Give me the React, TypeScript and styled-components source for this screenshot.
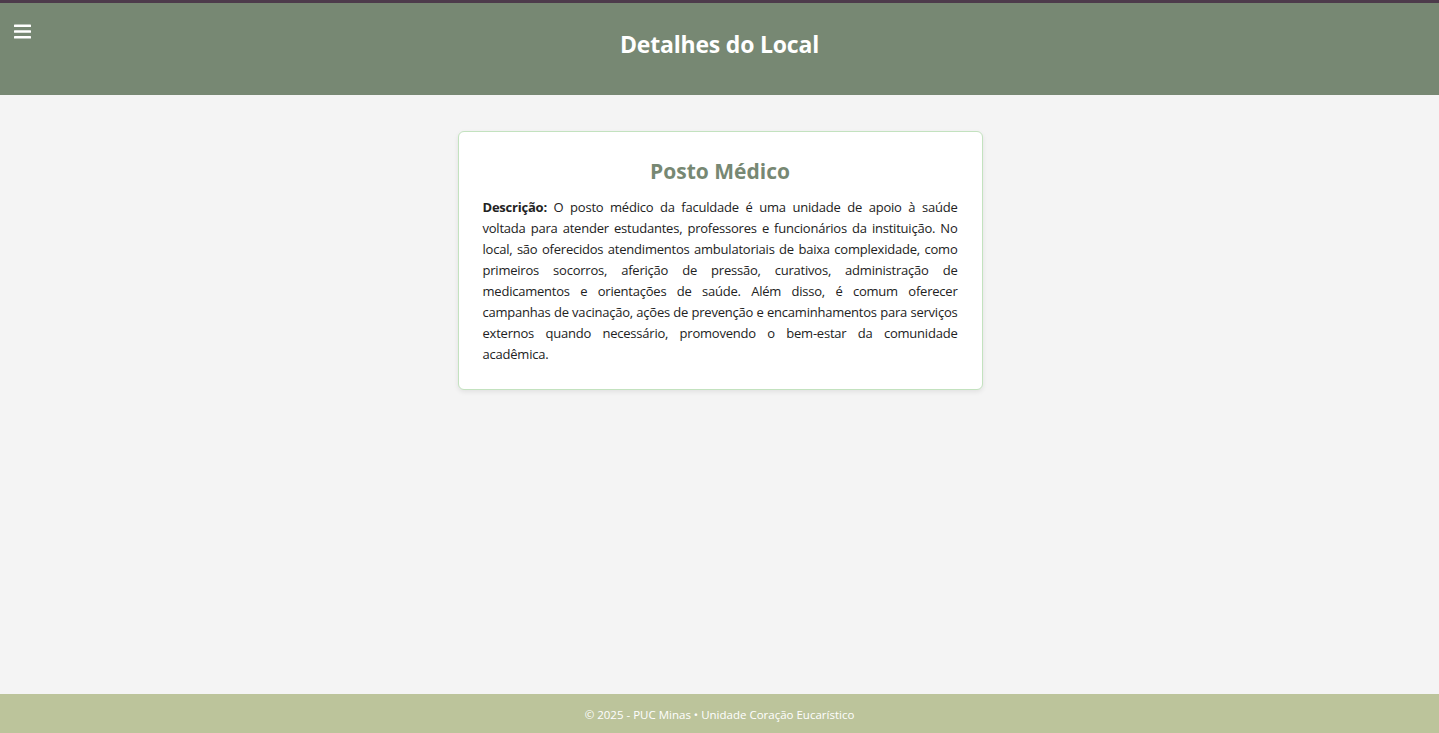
import React from "react";
import styled, { createGlobalStyle } from "styled-components";

const Global = createGlobalStyle`
  * { box-sizing: border-box; }
  html, body { margin: 0; padding: 0; }
  body {
    font-family: "Open Sans", "Noto Sans", "DejaVu Sans", sans-serif;
    background: #f4f4f4;
    color: #222;
  }
`;

const Page = styled.div`
  min-height: 100vh;
  display: flex;
  flex-direction: column;
`;

const Header = styled.header`
  position: relative;
  height: 95px;
  background: #778873;
  border-top: 3px solid #4d3b4b;
  display: flex;
  align-items: center;
  justify-content: center;
`;

const MenuButton = styled.button`
  position: absolute;
  left: 14px;
  top: 20px;
  padding: 0;
  border: 0;
  background: none;
  width: 17px;
  height: 17px;
  display: flex;
  cursor: pointer;
`;

const Title = styled.h1`
  margin: 0 0 10px;
  font-size: 23px;
  font-weight: 700;
  color: #ffffff;
  letter-spacing: -0.2px;
`;

const Main = styled.main`
  flex: 1;
  display: flex;
  justify-content: center;
  align-items: flex-start;
  padding-top: 36px;
  padding-left: 1px;
`;

const Card = styled.section`
  width: 525px;
  background: #ffffff;
  border: 1px solid #c3e2bf;
  border-radius: 6px;
  box-shadow: 0 2px 5px rgba(0, 0, 0, 0.08);
  padding: 23px 24px 24px;
`;

const CardTitle = styled.h2`
  margin: 0 0 10px;
  text-align: center;
  font-size: 21px;
  line-height: 32px;
  font-weight: 700;
  color: #778873;
`;

const Description = styled.p`
  margin: 0;
  font-size: 13px;
  line-height: 21px;
  letter-spacing: -0.22px;
  text-align: justify;
  color: #222;
`;

const Footer = styled.footer`
  height: 39px;
  padding-top: 2px;
  background: #bcc49b;
  display: flex;
  align-items: center;
  justify-content: center;
  font-size: 11.5px;
  color: #ffffff;
`;

export default function App() {
  return (
    <Page>
      <Global />
      <Header>
        <MenuButton aria-label="Menu">
          <svg width="17" height="17" viewBox="0 0 17 17">
            <rect x="0" y="1.5" width="17" height="2.6" rx="0.6" fill="#fff" />
            <rect x="0" y="7.2" width="17" height="2.6" rx="0.6" fill="#fff" />
            <rect x="0" y="12.9" width="17" height="2.6" rx="0.6" fill="#fff" />
          </svg>
        </MenuButton>
        <Title>Detalhes do Local</Title>
      </Header>
      <Main>
        <Card>
          <CardTitle>Posto Médico</CardTitle>
          <Description>
            <strong>Descrição:</strong> O posto médico da faculdade é uma unidade de apoio à saúde voltada para
            atender estudantes, professores e funcionários da instituição. No local, são oferecidos atendimentos
            ambulatoriais de baixa complexidade, como primeiros socorros, aferição de pressão, curativos,
            administração de medicamentos e orientações de saúde. Além disso, é comum oferecer campanhas de
            vacinação, ações de prevenção e encaminhamentos para serviços externos quando necessário, promovendo o
            bem-estar da comunidade acadêmica.
          </Description>
        </Card>
      </Main>
      <Footer>© 2025 - PUC Minas • Unidade Coração Eucarístico</Footer>
    </Page>
  );
}
